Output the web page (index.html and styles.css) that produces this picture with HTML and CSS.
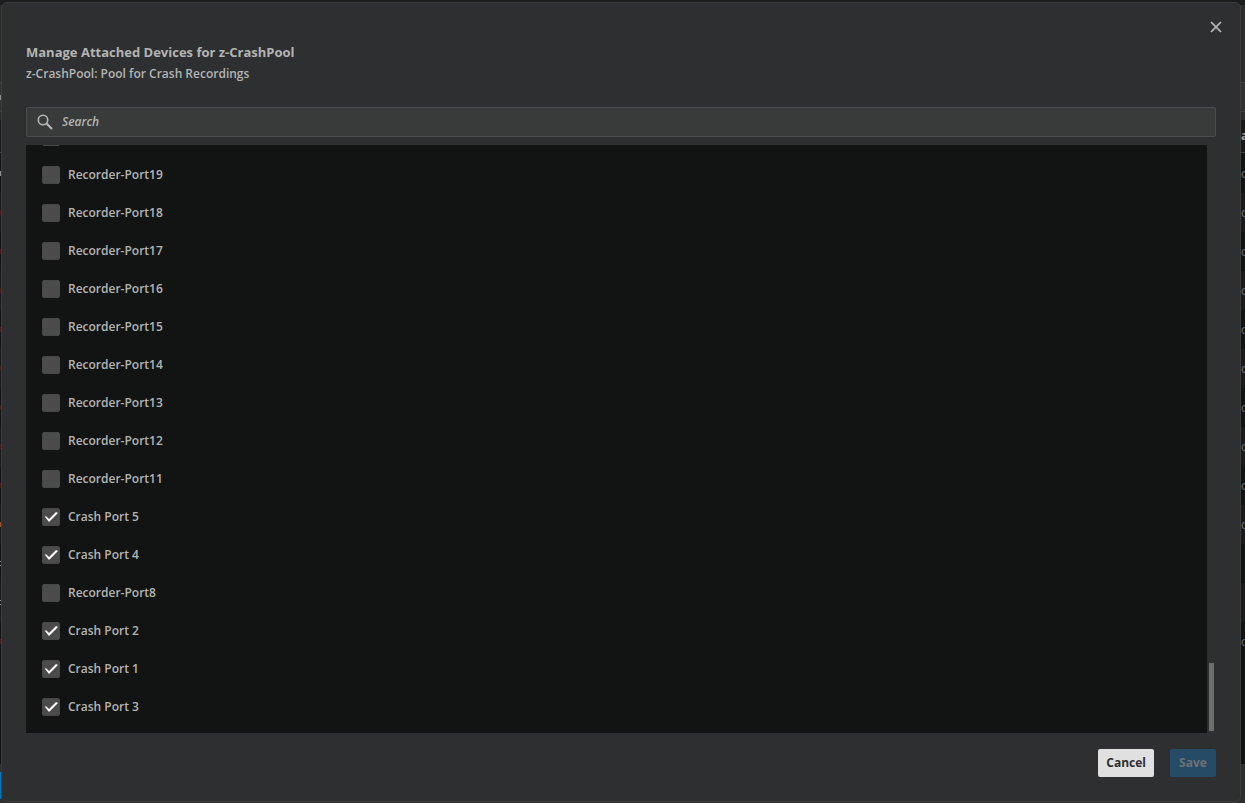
FILE: index.html
```html
<!DOCTYPE html>
<html lang="en">
<head>
<meta charset="utf-8">
<title>Manage Attached Devices</title>
<link rel="stylesheet" href="styles.css">
</head>
<body>
<div class="page" aria-hidden="true">
  <div class="page-top"></div>
  <div class="page-bar"></div>
  <div class="page-tools"><i class="mark mark-light"></i></div>
  <div class="page-gap"></div>
  <div class="page-head"><span class="edge edge-bold">a</span></div>
  <div class="page-rows">
    <div class="page-row"><i class="mark mark-light"></i><span class="edge">o</span></div>
    <div class="page-row"><i class="mark mark-red"></i><span class="edge">o</span></div>
    <div class="page-row"><i class="mark mark-red"></i><span class="edge">o</span></div>
    <div class="page-row"><i class="mark mark-red"></i><span class="edge">o</span></div>
    <div class="page-row"><i class="mark mark-red"></i><span class="edge">o</span></div>
    <div class="page-row"><i class="mark mark-red"></i><span class="edge">o</span></div>
    <div class="page-row"><i class="mark mark-red"></i><span class="edge">o</span></div>
    <div class="page-row"><i class="mark mark-red"></i><span class="edge">o</span></div>
    <div class="page-row"><i class="mark mark-red"></i><span class="edge">o</span></div>
    <div class="page-row"><i class="mark mark-orange"></i><span class="edge">o</span></div>
    <div class="page-row"><i class="mark mark-dots"></i></div>
    <div class="page-row"><i class="mark mark-dots"></i></div>
    <div class="page-row"><i class="mark mark-red"></i><span class="edge">o</span></div>
  </div>
  <div class="page-foot"><i class="mark mark-blue"></i></div>
</div>

<section class="dialog" role="dialog" aria-modal="true" aria-labelledby="title">
  <div class="dialog-top">
    <button class="close" type="button" aria-label="Close">
      <svg viewBox="0 0 12 12" width="12" height="12"><path d="M1 1l10 10M11 1L1 11" fill="none" stroke="#bcbcbc" stroke-width="1.7"/></svg>
    </button>
  </div>
  <header class="heading">
    <h1 class="title" id="title">Manage Attached Devices for z-CrashPool</h1>
    <p class="subtitle">z-CrashPool: Pool for Crash Recordings</p>
  </header>
  <label class="search">
    <svg viewBox="0 0 16 16" width="16" height="16" aria-hidden="true"><circle cx="6" cy="6" r="4.7" fill="none" stroke="#b5b5b5" stroke-width="1.6"/><path d="M9.6 9.6L15 15" fill="none" stroke="#b5b5b5" stroke-width="2.1"/></svg>
    <input class="search-input" type="search" placeholder="Search" aria-label="Search">
  </label>
  <div class="scroller">
    <div class="list">
      <label class="item"><input class="check" type="checkbox">Recorder-Port20</label>
      <label class="item"><input class="check" type="checkbox">Recorder-Port19</label>
      <label class="item"><input class="check" type="checkbox">Recorder-Port18</label>
      <label class="item"><input class="check" type="checkbox">Recorder-Port17</label>
      <label class="item"><input class="check" type="checkbox">Recorder-Port16</label>
      <label class="item"><input class="check" type="checkbox">Recorder-Port15</label>
      <label class="item"><input class="check" type="checkbox">Recorder-Port14</label>
      <label class="item"><input class="check" type="checkbox">Recorder-Port13</label>
      <label class="item"><input class="check" type="checkbox">Recorder-Port12</label>
      <label class="item"><input class="check" type="checkbox">Recorder-Port11</label>
      <label class="item"><input class="check" type="checkbox" checked>Crash Port 5</label>
      <label class="item"><input class="check" type="checkbox" checked>Crash Port 4</label>
      <label class="item"><input class="check" type="checkbox">Recorder-Port8</label>
      <label class="item"><input class="check" type="checkbox" checked>Crash Port 2</label>
      <label class="item"><input class="check" type="checkbox" checked>Crash Port 1</label>
      <label class="item"><input class="check" type="checkbox" checked>Crash Port 3</label>
    </div>
    <div class="track"><div class="thumb"></div></div>
  </div>
  <footer class="actions">
    <button class="btn btn-cancel" type="button">Cancel</button>
    <button class="btn btn-save" type="button" disabled>Save</button>
  </footer>
</section>
</body>
</html>
```
FILE: styles.css
```css
* { box-sizing: border-box; }

body {
  margin: 0;
  height: 100vh;
  padding: 2px 4px 1px 1px;
  overflow: hidden;
  background: #1b1d1c;
  color: #b4b4b4;
  font: 600 12px/18px "Open Sans", "Noto Sans", sans-serif;
}

/* Page behind the dialog */
.page {
  position: fixed;
  inset: 0;
  display: flex;
  flex-direction: column;
  overflow: hidden;
  background: #191919;
  color: #6c7070;
}
.page-top { height: 5px; background: #1b1d1c; }
.page-bar { height: 77px; background: #2b2b2a; }
.page-tools {
  height: 30px;
  display: flex;
  align-items: center;
  border: solid #414141;
  border-width: 1px 0;
  background: #313130;
}
.page-gap { height: 8px; background: #2b2b2a; }
.page-head {
  height: 33px;
  display: flex;
  align-items: center;
  border-bottom: 1px solid #414141;
}
.page-rows { flex: 1; padding-top: 1px; background: #111312; }
.page-row { height: 39px; display: flex; align-items: center; }
.page-row:nth-child(even) { background: #1a1a1a; }
.page-foot {
  height: 39px;
  display: flex;
  align-items: flex-end;
  padding-bottom: 4px;
  background: #2d2e2e;
}
.edge { width: 4px; margin-left: auto; font-weight: 400; }
.edge-bold { font-weight: 700; color: #a0a0a0; }
.mark { width: 1px; height: 5px; }
.mark-light { background: #8c938f; }
.mark-red { background: #4a1a1a; }
.mark-orange { background: #a0522d; }
.mark-dots { border: solid #999; border-width: 1px 0; }
.mark-blue { height: 27px; background: #0074bd; }

/* Dialog */
.dialog {
  position: relative;
  height: 100%;
  display: flex;
  flex-direction: column;
  padding: 0 24px 24px;
  border: 1px solid #3c3d3e;
  border-radius: 6px;
  background: #2e2f31;
}
.dialog-top {
  height: 38px;
  flex: none;
  display: flex;
  justify-content: flex-end;
  align-items: center;
  padding-top: 10px;
}
.close {
  width: 24px;
  height: 24px;
  margin-right: -12px;
  display: grid;
  place-items: center;
  padding: 0;
  border: 0;
  background: none;
}
.heading { flex: none; padding-bottom: 22px; }
.title { margin: 0; font-size: 13px; line-height: 22px; font-weight: 700; }
.subtitle { margin: 0; line-height: 22px; }

.search {
  flex: none;
  height: 30px;
  display: flex;
  align-items: center;
  gap: 9px;
  padding: 0 10px;
  border: 1px solid #4a4c4b;
  border-radius: 2px;
  background: #393b3a;
}
.search-input {
  flex: 1;
  min-width: 0;
  padding: 0;
  border: 0;
  outline: 0;
  background: none;
  color: #b4b4b4;
  font: inherit;
}
.search-input::placeholder { color: #b4b4b4; font-style: italic; }

.scroller { flex: 1; min-height: 0; display: flex; margin-top: 8px; }
.list {
  flex: 1;
  display: flex;
  flex-direction: column;
  justify-content: flex-end;
  overflow: hidden;
  padding: 0 16px 7px;
  background: #121413;
}
.item {
  flex: none;
  height: 38px;
  display: flex;
  align-items: center;
  gap: 8px;
}
.check {
  appearance: none;
  width: 18px;
  height: 18px;
  margin: 0;
  display: grid;
  place-items: center;
  border: 1px solid #474848;
  border-radius: 2px;
  background: #4b4b4b;
}
.check:checked::before {
  content: "";
  width: 14px;
  height: 12px;
  background: #fff;
  clip-path: polygon(1px 6px, 2px 5px, 5px 8px, 12px 1px, 14px 2px, 5px 11px);
}
.track {
  width: 9px;
  display: flex;
  flex-direction: column;
  justify-content: flex-end;
  padding: 2px;
}
.thumb { height: 68px; background: #6e6e6e; }

.actions {
  flex: none;
  display: flex;
  justify-content: flex-end;
  gap: 16px;
  padding-top: 16px;
}
.btn {
  min-width: 46px;
  height: 28px;
  padding: 0 8px;
  border: 0;
  border-radius: 2px;
  font: 700 12px/18px "Open Sans", "Noto Sans", sans-serif;
}
.btn-cancel { background: #e0e0e0; color: #2e2f31; }
.btn-save { background: #264b66; color: #6d7275; }
```
